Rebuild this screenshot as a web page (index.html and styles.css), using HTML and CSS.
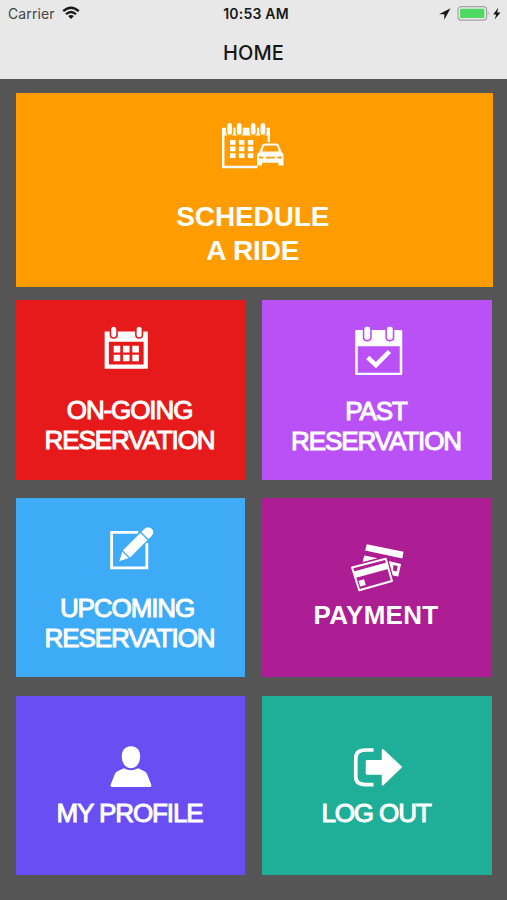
FILE: index.html
```html
<!DOCTYPE html>
<html lang="en">
<head>
<meta charset="utf-8">
<title>Home</title>
<link rel="stylesheet" href="styles.css">
</head>
<body>
<header class="header">
  <div class="status">
    <div class="carrier"><span>Carrier</span>
      <svg width="18" height="14" viewBox="0 0 18 14" fill="none" stroke="#181818" stroke-width="2.4"><path d="M1.2 5.2Q9-1.9 16.8 5.2"/><path d="M4 8.2Q9 3.8 14 8.2"/><path d="M9 13 6.1 10.1Q9 7.7 11.9 10.1Z" fill="#181818" stroke="none"/></svg>
    </div>
    <time class="clock">10:53 AM</time>
    <div class="power">
      <svg width="64" height="18" viewBox="438 5 64 18"><path d="M450.5 8.2 439 14.2h5.300v5.600z" fill="#181818"/><rect x="458" y="6.700" width="28.600" height="13.400" rx="3" fill="#e8e8e8" stroke="#a4a4a4" stroke-width="1.200"/><rect x="460" y="8.800" width="24.400" height="9.200" rx="1" fill="#4cd964"/><path d="M487.800 11.500q2 1.800 0 4z" fill="#a4a4a4"/><path d="M498.200 7.800 493.200 14.500h3l-1.500 5 5.800-7h-3.200z" fill="#181818"/></svg>
    </div>
  </div>
  <h1 class="title">HOME</h1>
</header>
<main class="grid">
  <a class="tile schedule">
    <svg width="64" height="50" viewBox="222.5 122 64 50">
      <path d="M223.5 128.5h48v7h-48z" fill="#fff"/>
      <path d="M259 167H224.700V129H270.300V142" fill="none" stroke="#fff" stroke-width="2.400"/>
      <g fill="#fff" stroke="#ff9d00" stroke-width="1.300"><rect x="228.200" y="122.400" width="6" height="13" rx="3"/><rect x="237.700" y="122.400" width="6" height="13" rx="3"/><rect x="251.700" y="122.400" width="6" height="13" rx="3"/><rect x="261.400" y="122.400" width="6" height="13" rx="3"/></g>
      <g fill="#fff"><path d="M231.500 140h5.500v4.700h-5.500zM240.400 140h5.500v4.700h-5.500zM249.300 140h5.500v4.700h-5.500zM231.500 146.600h5.500v4.700h-5.500zM240.400 146.600h5.500v4.700h-5.500zM249.300 146.600h5.500v4.700h-5.500zM231.500 153.200h5.500v4.700h-5.500zM240.400 153.200h5.500v4.700h-5.500zM249.300 153.200h5.500v4.700h-5.500z"/>
      <path d="M258.500 165.400v-10q0-2.200 2.500-3.400l2.400-6.500q.8-2 2.800-2h11.600q2 0 2.800 2l2.400 6.500q2 1.200 2 3.400v10h-5v-2.600h-16.500v2.600z"/></g>
      <path d="M263.500 151.500 265.500 146.200q.3-.8 1.300-.8h10.400q1 0 1.300.8l2 5.300zM260.700 156.200l4.200.6v1.800h-4.200zM283 156.200l-4.200.6v1.800h4.200zM267.300 156.800h9v1.600h-9z" fill="#ff9d00"/>
    </svg>
    <span class="label"><span>SCHEDULE</span><span>A RIDE</span></span>
  </a>
  <a class="tile ongoing">
    <svg width="56" height="48" viewBox="102.750 324 56 48">
      <path fill="#fff" fill-rule="evenodd" d="M104.400 331.500h43.200v37.300h-43.200zM108.600 341.700v22.700h34.800v-22.700z"/>
      <g fill="#fff" stroke="#e71a1b" stroke-width="1.600"><rect x="110.200" y="326" width="6.600" height="12" rx="3.300"/><rect x="135.600" y="326" width="6.600" height="12" rx="3.300"/></g>
      <path fill="#fff" d="M113.400 345.800h6.600v6.600h-6.600zM122.700 345.800h6.600v6.600h-6.600zM132 345.800h6.600v6.600h-6.600zM113.400 354.700h6.600v6.600h-6.600zM122.700 354.700h6.600v6.600h-6.600zM132 354.700h6.600v6.600h-6.600z"/>
    </svg>
    <span class="label"><span>ON-GOING</span><span>RESERVATION</span></span>
  </a>
  <a class="tile past">
    <svg width="52" height="52" viewBox="351.250 324 52 52">
      <path fill="#fff" fill-rule="evenodd" d="M356.500 330h45q1 0 1 1v43q0 1-1 1h-45q-1 0-1-1v-43q0-1 1-1zM358 346.300v26.400h42v-26.400z"/>
      <g fill="#fff" stroke="#ba51f7" stroke-width="1.600"><rect x="363.800" y="326" width="7.400" height="14.600" rx="3"/><rect x="386.400" y="326" width="7.400" height="14.600" rx="3"/></g>
      <path d="M368 357.500 376.200 365.200 389.700 351.500" fill="none" stroke="#fff" stroke-width="4.500"/>
    </svg>
    <span class="label"><span>PAST</span><span>RESERVATION</span></span>
  </a>
  <a class="tile upcoming">
    <svg width="48" height="48" viewBox="106.750 526 48 48">
      <path d="M138 533.400H111.400V568.800H146.600V544" fill="none" stroke="#fff" stroke-width="2.800"/>
      <g transform="translate(118 563.200) rotate(-45)"><path fill="#fff" stroke="#3eabf7" stroke-width="1.300" d="M0 0 11-5.700V5.700zM11-5.700H37V5.700H11zM37-5.700H42.500q5.500.7 5.500 5.700T42.500 5.700H37z"/></g>
    </svg>
    <span class="label"><span>UPCOMING</span><span>RESERVATION</span></span>
  </a>
  <a class="tile payment">
    <svg width="56" height="52" viewBox="349.250 542 56 52">
      <path fill="#fff" d="M367 544.200 403.800 551.800 402.600 558.500 365.400 550.500zM364.500 555.500 378 558.200 363 562zM389 561 401.300 564 398.500 576.500 393 575.500z"/>
      <path fill="#ad1d94" d="M393.500 565 398 566 396.800 571.500 393.500 570.700z"/>
      <path fill="#ad1d94" stroke="#ad1d94" stroke-width="4" d="M352.500 567.500 386 558.500 392 581 359.500 590.300z"/>
      <path fill="#ad1d94" stroke="#fff" stroke-width="2" stroke-linejoin="round" d="M352.300 567.500 386 558.700 392.200 581 359.500 590.300z"/>
      <path fill="#fff" d="M354 571.500 387.800 562.300 389.300 568.700 355.500 578zM358.800 580.800 364.300 579.300 366 585 360.500 586.500z"/>
    </svg>
    <span class="label"><span>PAYMENT</span></span>
  </a>
  <a class="tile profile">
    <svg width="48" height="46" viewBox="106.750 744 48 46" fill="#fff">
      <path d="M130.700 746.200c6 0 9.200 4.300 9.200 10 0 7-4 12-9.200 12s-9.200-5-9.200-12c0-5.700 3.200-10 9.200-10z"/>
      <path d="M123.500 768.200q7.200 4.200 14.400 0l6.200 3q2 1 2.800 3l4 10.300q.8 2.500-1.500 2.500h-37.400q-2.300 0-1.500-2.500l4-10.300q.8-2 2.800-3z"/>
    </svg>
    <span class="label"><span>MY PROFILE</span></span>
  </a>
  <a class="tile logout">
    <svg width="56" height="46" viewBox="349.250 744 56 46">
      <path d="M373.800 750H365.500Q356 750 356 758.500V776.500Q356 784.600 365.500 784.600H373.800" fill="none" stroke="#fff" stroke-width="3.700"/>
      <path d="M367.300 760H382V750.500Q382 748 384 749.500L402.500 767 384 785Q382 786.500 382 784V774.700H367.300Q366 774.700 366 773.500V761.200Q366 760 367.300 760z" fill="#fff"/>
    </svg>
    <span class="label"><span>LOG OUT</span></span>
  </a>
</main>
</body>
</html>
```
FILE: styles.css
```css
* { box-sizing: border-box; }
body {
  margin: 0;
  width: 507px;
  height: 900px;
  overflow: hidden;
  background: #555;
  font-family: "Liberation Sans", Arial, sans-serif;
}
.header {
  height: 79px;
  background: #e8e8e8;
  font-family: Inter, "Liberation Sans", sans-serif;
  color: #181818;
}
.status {
  display: grid;
  grid-template-columns: 1fr auto 1fr;
  align-items: center;
  height: 27px;
  padding: 0 5px 0 8px;
}
.carrier {
  display: flex;
  align-items: center;
  gap: 7px;
  font-size: 14px;
  color: #444;
  letter-spacing: 0.1px;
}
.carrier svg { margin-top: -2px; }
.clock {
  margin-left: 2px;
  font-size: 14px;
  font-weight: 600;
  letter-spacing: 0.2px;
}
.power { display: flex; justify-content: flex-end; }
.title {
  margin: 0;
  padding-top: 13px;
  font-size: 20px;
  line-height: 26px;
  font-weight: 500;
  letter-spacing: 0.1px;
  text-align: center;
}
/* The first row is shorter than its tile, which narrows the gap below it. */
.grid {
  display: grid;
  grid-template-columns: 229.5px 229.5px;
  grid-template-rows: 188.5px 179.5px 179.5px 179.5px;
  column-gap: 17px;
  row-gap: 18.3px;
  padding: 14.3px 0 0 15.8px;
}
.tile {
  display: flex;
  flex-direction: column;
  align-items: center;
  color: #fff;
}
.tile svg { flex: none; }
.label {
  display: flex;
  flex-direction: column;
  align-items: center;
  margin-right: 2px;
  font-size: 26px;
  line-height: 30px;
  letter-spacing: -1.1px;
  white-space: nowrap;
  -webkit-text-stroke: 1px #fff;
}
.schedule {
  grid-column: 1 / 3;
  width: 477px;
  height: 193.5px;
  padding-top: 28.5px;
  background: #ff9d00;
}
.schedule svg { margin-right: 2px; }
.schedule .label {
  margin: 28px 3px 0 0;
  font-size: 28px;
  line-height: 34px;
  font-weight: 700;
  letter-spacing: -0.1px;
  -webkit-text-stroke: 0;
}
.ongoing { padding-top: 24px; background: #e71a1b; }
.ongoing .label { margin-top: 23px; }
.past { padding-top: 24px; background: #ba51f7; }
.past .label { margin-top: 20px; }
.upcoming { padding-top: 27.5px; background: #3eabf7; }
.upcoming .label { margin-top: 19.5px; }
.upcoming .label span:first-child { margin-right: 5px; }
.payment { padding-top: 44px; background: #ad1d94; }
.payment .label {
  margin-top: 6.5px;
  font-weight: 700;
  letter-spacing: 0.3px;
  -webkit-text-stroke: 0;
}
.profile { padding-top: 48px; background: #694ef3; }
.logout { padding-top: 48px; background: #1fae98; }
.profile .label, .logout .label { margin-top: 8.5px; }
```
